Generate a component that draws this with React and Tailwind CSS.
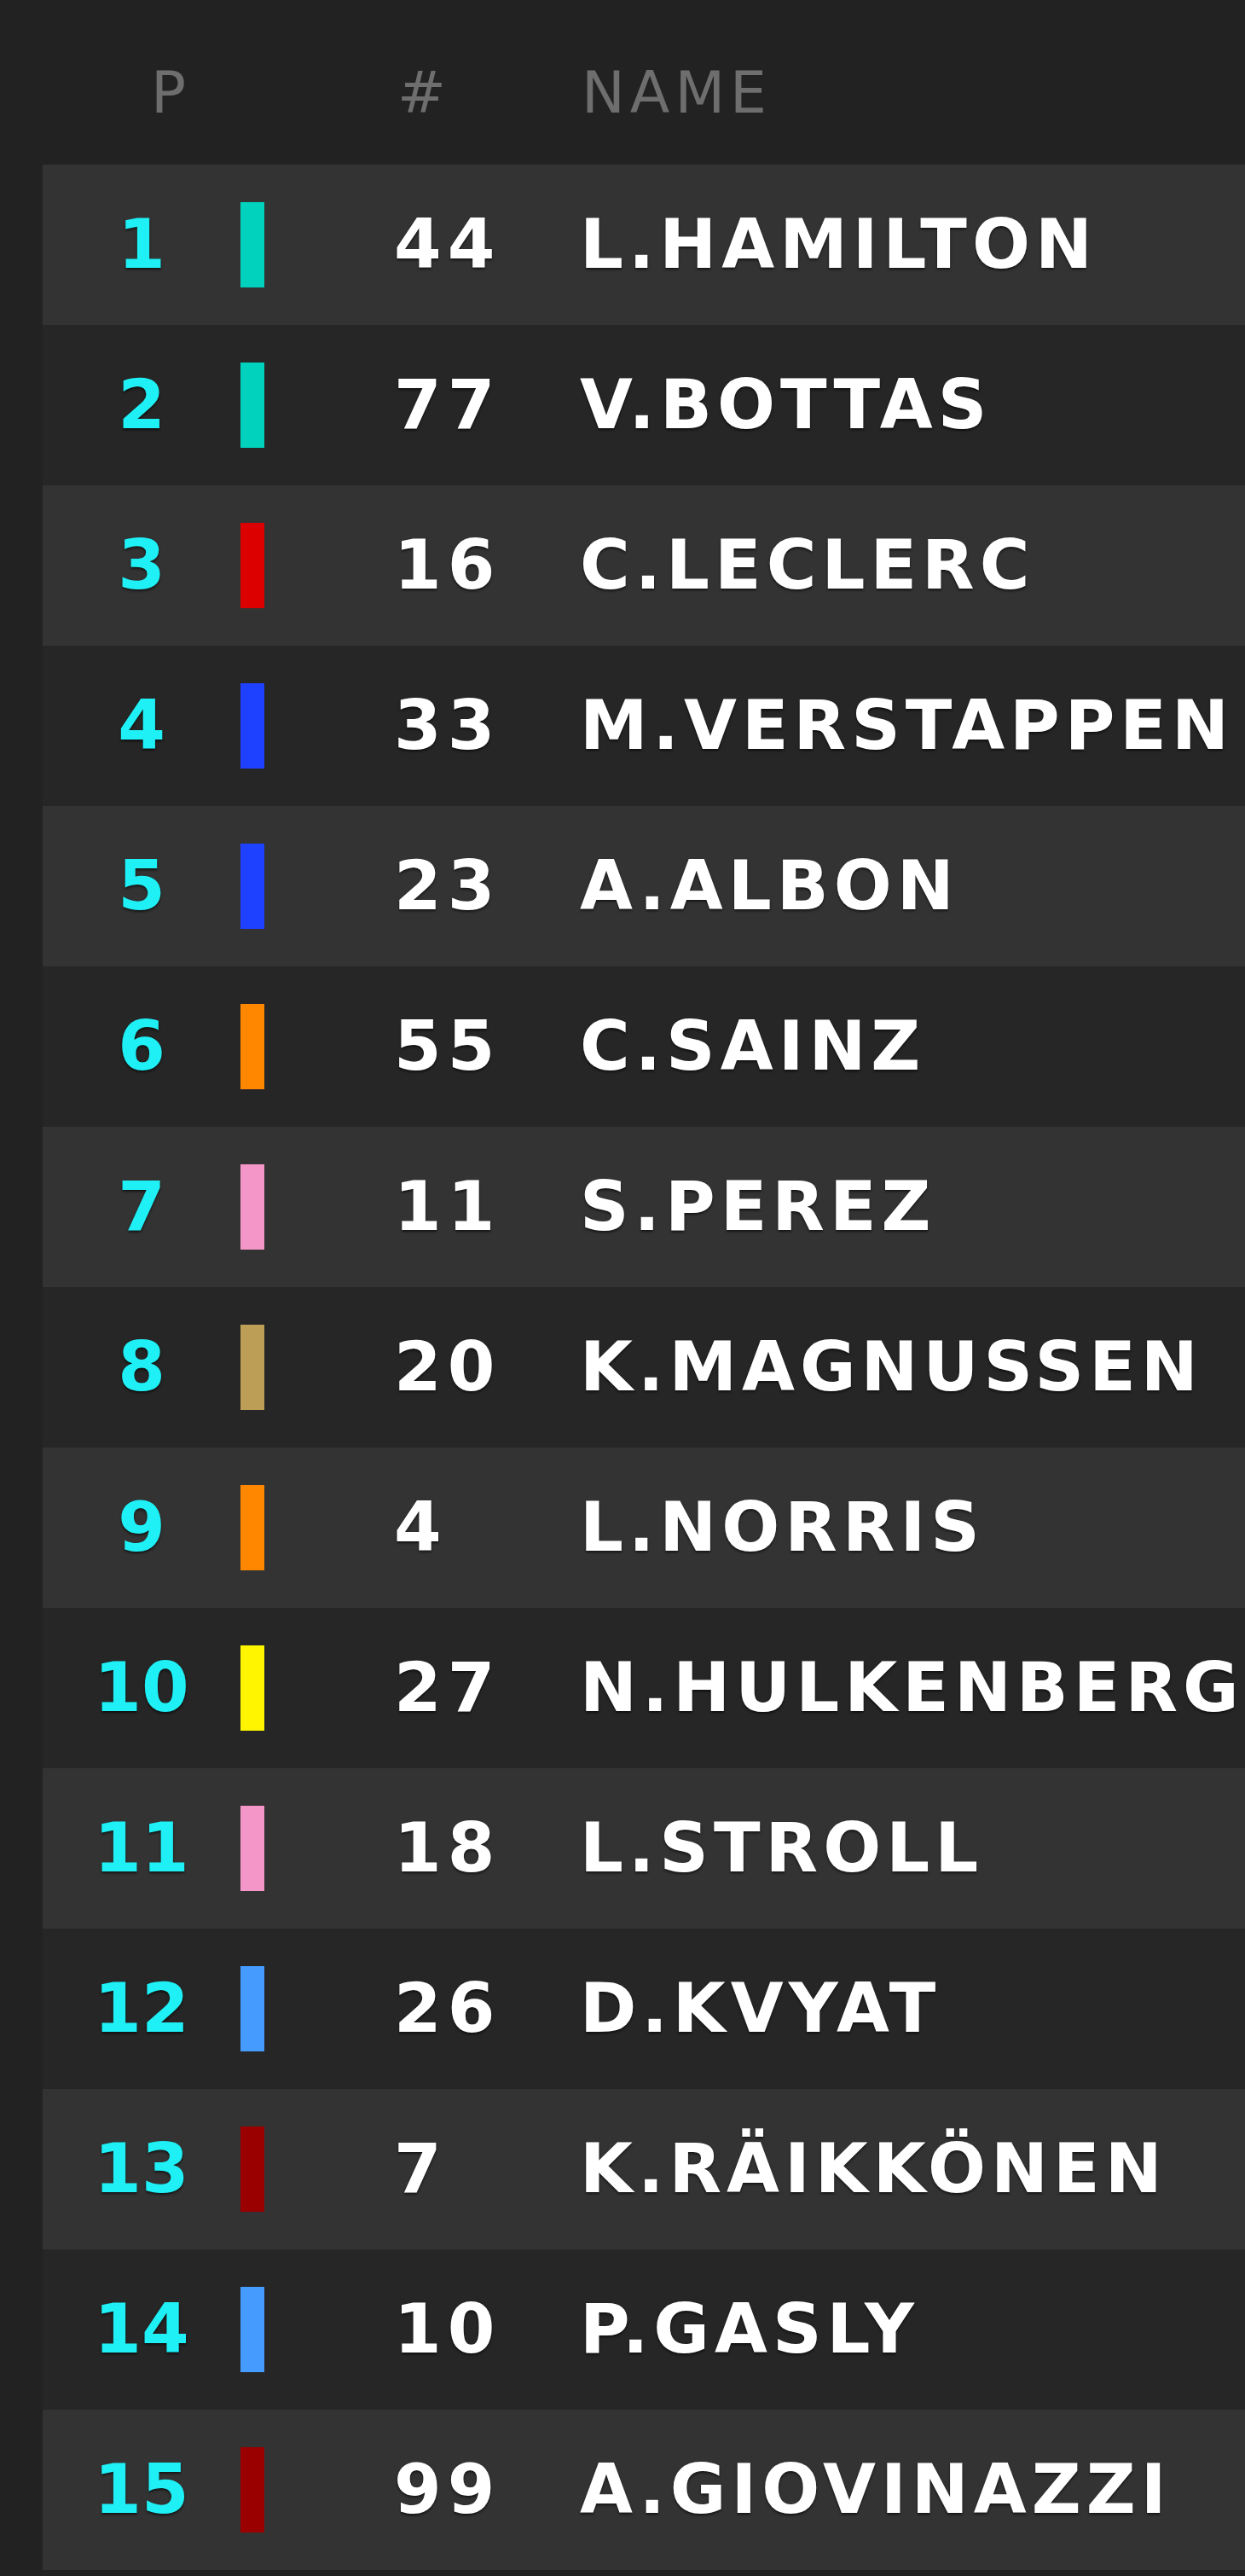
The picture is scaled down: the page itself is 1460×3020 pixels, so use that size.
import React from 'react';

const drivers = [
  { pos: 1, num: 44, name: 'L.HAMILTON', team: 'bg-[#00d2be]' },
  { pos: 2, num: 77, name: 'V.BOTTAS', team: 'bg-[#00d2be]' },
  { pos: 3, num: 16, name: 'C.LECLERC', team: 'bg-[#dc0000]' },
  { pos: 4, num: 33, name: 'M.VERSTAPPEN', team: 'bg-[#1e41ff]' },
  { pos: 5, num: 23, name: 'A.ALBON', team: 'bg-[#1e41ff]' },
  { pos: 6, num: 55, name: 'C.SAINZ', team: 'bg-[#ff8700]' },
  { pos: 7, num: 11, name: 'S.PEREZ', team: 'bg-[#f596c8]' },
  { pos: 8, num: 20, name: 'K.MAGNUSSEN', team: 'bg-[#bd9e57]' },
  { pos: 9, num: 4, name: 'L.NORRIS', team: 'bg-[#ff8700]' },
  { pos: 10, num: 27, name: 'N.HULKENBERG', team: 'bg-[#fff500]' },
  { pos: 11, num: 18, name: 'L.STROLL', team: 'bg-[#f596c8]' },
  { pos: 12, num: 26, name: 'D.KVYAT', team: 'bg-[#469bff]' },
  { pos: 13, num: 7, name: 'K.RÄIKKÖNEN', team: 'bg-[#9b0000]' },
  { pos: 14, num: 10, name: 'P.GASLY', team: 'bg-[#469bff]' },
  { pos: 15, num: 99, name: 'A.GIOVINAZZI', team: 'bg-[#9b0000]' },
];

export default function App() {
  return (
    <div className="min-h-screen w-[1460px] overflow-hidden bg-[#222222] pl-[50px] font-['DejaVu_Sans',sans-serif]">
      {/* Header */}
      <div className="flex h-[193px] items-center pt-[24px] text-[68px] leading-none tracking-[6px] text-[#6e6e6e]">
        <span className="w-[416px] pl-[127px]">P</span>
        <span className="w-[216px]">#</span>
        <span>NAME</span>
      </div>

      {/* Rows */}
      {drivers.map((d, i) => (
        <div
          key={d.pos}
          className={`flex h-[188px] items-center whitespace-nowrap text-[80px] font-bold leading-none [text-shadow:0_2px_3px_rgba(0,0,0,0.6)] ${
            i % 2 === 0 ? 'bg-[#333333]' : 'bg-[#262626]'
          }`}
        >
          <span className="w-[232px] text-center text-[#1ef0f5]">{d.pos}</span>
          <span className={`h-[100px] w-[28px] ${d.team}`} />
          <span className="ml-[152px] w-[218px] tracking-[7px] text-white">{d.num}</span>
          <span className="tracking-[6px] text-white">{d.name}</span>
        </div>
      ))}
    </div>
  );
}
